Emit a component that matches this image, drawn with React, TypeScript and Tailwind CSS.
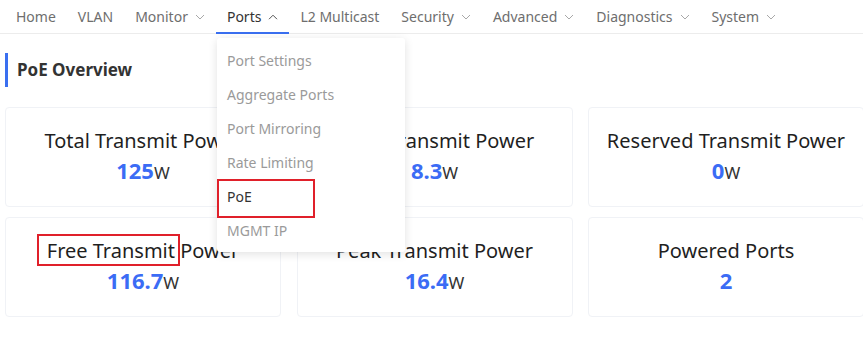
import React from "react";

const navItems = [
  { label: "Home" },
  { label: "VLAN" },
  { label: "Monitor", menu: true },
  { label: "Ports", menu: true, active: true },
  { label: "L2 Multicast" },
  { label: "Security", menu: true },
  { label: "Advanced", menu: true },
  { label: "Diagnostics", menu: true },
  { label: "System", menu: true },
];

const portMenu = ["Port Settings", "Aggregate Ports", "Port Mirroring", "Rate Limiting", "PoE", "MGMT IP"];

const stats = [
  { title: "Total Transmit Power", value: "125", unit: "W" },
  { title: "Used Transmit Power", value: "8.3", unit: "W" },
  { title: "Reserved Transmit Power", value: "0", unit: "W" },
  { title: "Free Transmit Power", value: "116.7", unit: "W", mark: true },
  { title: "Peak Transmit Power", value: "16.4", unit: "W" },
  { title: "Powered Ports", value: "2" },
];

function Chevron({ up }: { up?: boolean }) {
  return (
    <svg width="10" height="6" viewBox="0 0 10 6" fill="none" className="ml-[7px] mt-[1px]">
      <path
        d={up ? "M1 5.2 L5 1.2 L9 5.2" : "M1 1 L5 5 L9 1"}
        stroke={up ? "#555" : "#a8a8a8"}
        strokeWidth="1"
      />
    </svg>
  );
}

export default function App() {
  return (
    <div
      className="relative w-[863px] h-[344px] overflow-hidden bg-white"
      style={{ fontFamily: '"Noto Sans", "Open Sans", sans-serif' }}
    >
      <nav className="h-[34px] flex items-stretch pl-[5px] border-b border-[#ececec]">
        {navItems.map((item) => (
          <div
            key={item.label}
            className={
              "relative flex items-center px-[11px] text-[14px] " +
              (item.active ? "text-[#333]" : "text-[#6e6e6e]")
            }
          >
            <span>{item.label}</span>
            {item.menu && <Chevron up={item.active} />}
            {item.active && (
              <div className="absolute left-0 right-0 bottom-[-1px] h-[2px] bg-[#3a6ff0]" />
            )}
          </div>
        ))}
      </nav>

      <main className="pl-[5px]">
        <div className="mt-[19px] h-[34px] flex items-center border-l-[3px] border-[#3a6ff0]">
          <h1 className="pl-[9px] text-[17px] font-bold text-[#333]">PoE Overview</h1>
        </div>

        <div className="mt-[20px] grid grid-cols-[276px_276px_276px] gap-x-[15.5px] gap-y-[10px]">
          {stats.map((s) => (
            <div
              key={s.title}
              className="h-[100px] rounded-[4px] border border-[#f0f2f6] flex flex-col items-center justify-center"
            >
              <div className="relative text-[20px] leading-[28px] text-[#1f1f1f]">
                {s.mark && (
                  <div className="absolute left-[-10px] top-[-3px] w-[143px] h-[32px] border-2 border-[#e0202a]" />
                )}
                {s.title}
              </div>
              <div className="leading-[30px]">
                <span className="text-[22px] font-bold text-[#3b6cf5]">{s.value}</span>
                {s.unit && <span className="text-[17px] text-[#333]">{s.unit}</span>}
              </div>
            </div>
          ))}
        </div>
      </main>

      <div className="absolute left-[217px] top-[38px] w-[188px] h-[214px] bg-white rounded-[3px] shadow-[0_2px_10px_rgba(0,0,0,0.12)] pt-[5px]">
        {portMenu.map((m) => (
          <div
            key={m}
            className={
              "relative h-[34px] flex items-center px-[10px] text-[14px] " +
              (m === "PoE" ? "text-[#333]" : "text-[#9a9a9a]")
            }
          >
            {m === "PoE" && (
              <div className="absolute left-0 top-0 w-[98px] h-[39px] border-2 border-[#e0202a]" />
            )}
            {m}
          </div>
        ))}
      </div>
    </div>
  );
}
